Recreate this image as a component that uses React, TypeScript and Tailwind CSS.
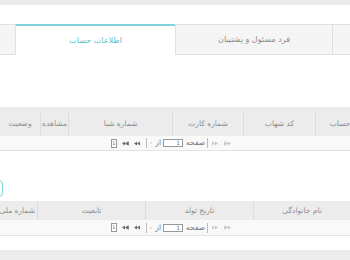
const font = { fontFamily: '"DejaVu Sans", "Noto Sans", sans-serif' };

function Arrow({ dir, bar, light }: { dir: "l" | "r"; bar?: boolean; light?: boolean }) {
  const c = light ? "#c8c8c8" : "#6b6b6b";
  return (
    <svg width="7" height="5" viewBox="0 0 7 5" className="shrink-0">
      {dir === "l" ? (
        <>
          <path d="M0 2.5 L3 0.5 V4.5 Z M3 2.5 L6 0.5 V4.5 Z" fill={c} />
          {bar && <rect x="6.2" y="0.5" width="0.8" height="4" fill={c} />}
        </>
      ) : (
        <>
          <path d="M7 2.5 L4 0.5 V4.5 Z M4 2.5 L1 0.5 V4.5 Z" fill={c} />
          {bar && <rect x="0" y="0.5" width="0.8" height="4" fill={c} />}
        </>
      )}
    </svg>
  );
}

function Pager({ h }: { h: string }) {
  return (
    <div className={`${h} bg-[#f9f9f9] border-b border-[#e3e3e3] flex items-center justify-center`}>
      <div className="flex items-center text-[7.5px] text-[#777] mr-[8px]">
        <div className="flex items-center gap-[6px] ml-[3px]">
          <Arrow dir="r" bar light />
          <Arrow dir="r" light />
        </div>
        <div className="w-px h-[10px] bg-[#bbb] ml-[2px]" />
        <span className="ml-[3px]">صفحه</span>
        <div className="w-[20px] h-[8px] border border-[#999] bg-white text-[6px] leading-[6px] text-right pr-[2px] ml-[2px]">1</div>
        <span className="ml-[2px]">از ۰</span>
        <div className="w-px h-[10px] bg-[#bbb] ml-[5px]" />
        <div className="flex items-center gap-[5px] ml-[5px]">
          <Arrow dir="l" />
          <Arrow dir="l" bar />
        </div>
        <div className="w-[6px] h-[9px] border border-[#999] bg-white text-[5px] leading-[7px] text-center">1</div>
      </div>
    </div>
  );
}

function Cell({ w, text, last, align }: { w: string; text: string; last?: boolean; align?: string }) {
  return (
    <div
      className={`${w} shrink-0 h-full flex items-center ${align ?? "justify-center"} overflow-hidden whitespace-nowrap ${
        last ? "" : "border-l border-[#dcdcdc]"
      }`}
    >
      {text}
    </div>
  );
}

export default function App() {
  return (
    <div dir="rtl" className="w-[350px] h-[260px] bg-white overflow-hidden flex flex-col" style={font}>
      <div className="h-[5px] bg-[#ebebeb] shrink-0" />

      {/* tabs */}
      <div className="mt-[19px] h-[31px] flex shrink-0 text-[8px]">
        <div className="w-[17px] shrink-0 bg-[#f5f5f5] border-t border-b border-[#e0e0e0]" />
        <div className="w-[158px] shrink-0 bg-[#f5f5f5] border-t border-r border-l border-b border-[#e0e0e0] flex items-center justify-center text-[#8a8a8a]">
          فرد مسئول و پشتیبان
        </div>
        <div className="w-[159px] shrink-0 bg-white border-t-2 border-t-[#7fd3db] flex items-center justify-center text-[#59bfcc]">
          اطلاعات حساب
        </div>
        <div className="flex-1 bg-[#f5f5f5] border-t border-r border-b border-[#e0e0e0]" />
      </div>

      {/* table 1 */}
      <div className="mt-[52px] shrink-0">
        <div className="h-[29px] pt-[4px] bg-[#ececec] flex text-[7.5px] text-[#8c8c8c] -mr-[37px]">
          <Cell w="w-[72px]" text="شماره حساب" />
          <Cell w="w-[72px]" text="کد شهاب" />
          <Cell w="w-[71px]" text="شماره کارت" />
          <Cell w="w-[104px]" text="شماره شبا" />
          <Cell w="w-[28px]" text="مشاهده" />
          <Cell w="w-[40px]" text="وضعیت" last />
        </div>
        <Pager h="h-[15px]" />
      </div>

      {/* button */}
      <div className="mt-[29px] h-[17px] flex shrink-0">
        <div className="w-[60px] h-full border border-[#7fd3db] rounded-[4px] mr-auto -ml-[57px]" />
      </div>

      {/* table 2 */}
      <div className="mt-[4px] shrink-0">
        <div className="h-[19px] bg-[#ececec] flex text-[7.5px] text-[#8c8c8c]">
          <Cell w="w-[97px]" text="نام خانوادگی" />
          <Cell w="w-[108px]" text="تاریخ تولد" />
          <Cell w="w-[108px]" text="تابعیت" />
          <Cell w="w-[37px]" text="شماره ملی/اتباع" align="justify-start pr-[2px]" last />
        </div>
        <Pager h="h-[16px]" />
      </div>

      <div className="flex-1" />
      <div className="h-[10px] bg-[#ececec] shrink-0" />
    </div>
  );
}
